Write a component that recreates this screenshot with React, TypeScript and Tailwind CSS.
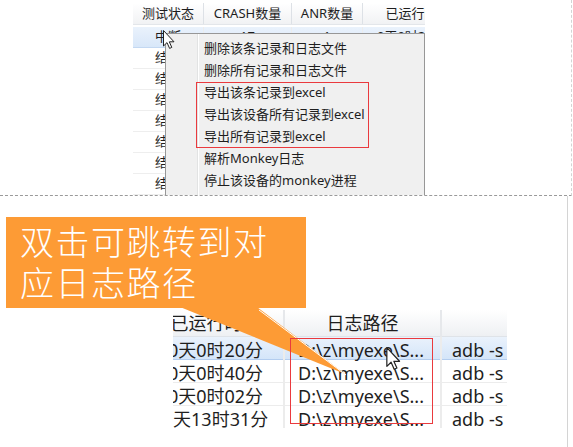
import React from 'react';

const FONT = { fontFamily: '"Noto Sans", "Noto Sans CJK SC", sans-serif' };

const menuItems = [
  '删除该条记录和日志文件',
  '删除所有记录和日志文件',
  '导出该条记录到excel',
  '导出该设备所有记录到excel',
  '导出所有记录到excel',
  '解析Monkey日志',
  '停止该设备的monkey进程',
];

const topRows = [
  ['中断', '17', '1', '0天0时20分'],
  ['结束', '0', '0', '0天0时40分'],
  ['结束', '2', '0', '0天0时02分'],
  ['结束', '0', '0', '0天13时31分'],
  ['结束', '1', '0', '0天0时15分'],
  ['结束', '0', '0', '0天1时10分'],
  ['结束', '3', '1', '0天0时33分'],
  ['结束', '0', '0', '0天2时05分'],
];

const bottomRows = [
  ['0天0时20分', 'D:\\z\\myexe\\S...', 'adb -s'],
  ['0天0时40分', 'D:\\z\\myexe\\S...', 'adb -s'],
  ['0天0时02分', 'D:\\z\\myexe\\S...', 'adb -s'],
  ['0天13时31分', 'D:\\z\\myexe\\S...', 'adb -s'],
];

const Cursor: React.FC<{ className: string }> = ({ className }) => (
  <svg className={className} viewBox="0 0 12 19">
    <path
      d="M0.5 0.5 L0.5 16 L4 12.6 L6.6 18.4 L8.8 17.4 L6.3 11.8 L11 11.8 Z"
      fill="#fff"
      stroke="#222"
      strokeWidth="1"
      strokeLinejoin="round"
    />
  </svg>
);

const App: React.FC = () => {
  return (
    <div className="w-[573px] h-[447px] bg-white relative overflow-hidden text-[#1e1e1e] flex flex-col" style={FONT}>
      {/* top capture: table + context menu */}
      <div className="relative flex flex-col shrink-0 h-[196px] w-[572px] border-r border-[#d4d4d4] border-b border-dashed border-b-[#9a9a9a] overflow-hidden pt-[3px]">
        <div className="ml-[133px] w-[292px] overflow-hidden text-[13px]">
          <div className="grid grid-cols-[71px_88px_71px_110px] h-[22px] bg-gradient-to-b from-white to-[#f1f2f4] border-b border-[#e3e6ea]">
            <div className="flex items-center justify-center border-r border-[#dde1e6]">测试状态</div>
            <div className="flex items-center justify-center border-r border-[#dde1e6]">CRASH数量</div>
            <div className="flex items-center justify-center border-r border-[#dde1e6]">ANR数量</div>
            <div className="flex items-center justify-center">已运行时间</div>
          </div>
          <div className="h-[2px]" />
          {topRows.map((r, i) => (
            <div
              key={i}
              className={`grid grid-cols-[71px_88px_71px_110px] h-[21px] border-b ${
                i === 0 ? 'bg-gradient-to-b from-[#eaf2fc] to-[#d8e7f9] border-[#c3d8f2]' : 'border-[#eeeeee]'
              }`}
            >
              <div className="flex items-center justify-center border-r border-[#ededed]">{r[0]}</div>
              <div className="flex items-center justify-center border-r border-[#ededed]">{r[1]}</div>
              <div className="flex items-center justify-center border-r border-[#ededed]">{r[2]}</div>
              <div className="flex items-center pl-[14px]">{r[3]}</div>
            </div>
          ))}
        </div>

        {/* context menu */}
        <div className="absolute left-[165px] top-[33px] w-[260px] h-[200px] bg-[#f0f0f0] border border-[#979797] flex pt-[4px]">
          <div className="w-[31px] shrink-0" />
          <div className="w-[2px] shrink-0 border-l border-[#e2e3e3] bg-white -mt-[4px]" />
          <div className="flex flex-col pl-[5px] text-[13px]">
            {menuItems.map((m) => (
              <div key={m} className="h-[22px] flex items-center whitespace-nowrap">
                {m}
              </div>
            ))}
          </div>
        </div>

        <div className="absolute left-[196px] top-[82px] w-[173px] h-[66px] border-[1.5px] border-[#ea3a3e]" />
        <Cursor className="absolute left-[163px] top-[30px] w-[12px] h-[19px]" />
      </div>

      {/* bottom capture: callout + path column */}
      <div className="relative flex flex-col flex-1 w-[568px] border-r border-[#d4d4d4] pt-[21px]">
        <div
          className="ml-[6px] w-[300px] h-[91px] bg-[#fd9b35] text-white pl-[14px] pt-[3px] text-[34px] leading-[41px] tracking-[1.5px] font-light"
          style={{ fontFamily: '"Noto Sans CJK SC", sans-serif' }}
        >
          双击可跳转到对
          <br />
          应日志路径
        </div>

        <div className="ml-[173px] mt-[2px] w-[334px] h-[118px] overflow-hidden text-[18px]">
          <div className="-ml-[25px]">
            <div className="grid grid-cols-[137px_157px_120px] h-[27px] bg-gradient-to-b from-white to-[#eef0f3] border-b border-[#dfe3e8]">
              <div className="flex items-center justify-center border-r-2 border-[#e6e8eb]">已运行时间</div>
              <div className="flex items-center justify-center border-r-2 border-[#e6e8eb]">日志路径</div>
              <div />
            </div>
            {bottomRows.map((r, i) => (
              <div
                key={i}
                className={`grid grid-cols-[137px_157px_120px] h-[23px] border-b ${
                  i === 0 ? 'bg-gradient-to-b from-[#eaf2fc] to-[#d4e5f9] border-[#b3cdef]' : 'border-[#ececec]'
                }`}
              >
                <div className="flex items-center justify-center border-r-2 border-[#ececec] whitespace-nowrap">{r[0]}</div>
                <div className="flex items-center pl-[13px] border-r-2 border-[#ececec] whitespace-nowrap overflow-hidden">{r[1]}</div>
                <div className="flex items-center pl-[10px] whitespace-nowrap">{r[2]}</div>
              </div>
            ))}
          </div>
        </div>

        {/* callout pointer */}
        <svg className="absolute left-0 top-0 w-[568px] h-[251px] pointer-events-none" viewBox="0 0 568 251">
          <polygon points="180,111 257,111 345,178" fill="#fd9b35" />
          <line x1="259" y1="114" x2="346" y2="179" stroke="#fff" strokeWidth="1" />
        </svg>

        <div className="absolute left-[290px] top-[142px] w-[143px] h-[86px] border-[1.5px] border-[#ea3a3e]" />
        <Cursor className="absolute left-[386px] top-[151px] w-[15px] h-[23px]" />
      </div>
    </div>
  );
};

export default App;
